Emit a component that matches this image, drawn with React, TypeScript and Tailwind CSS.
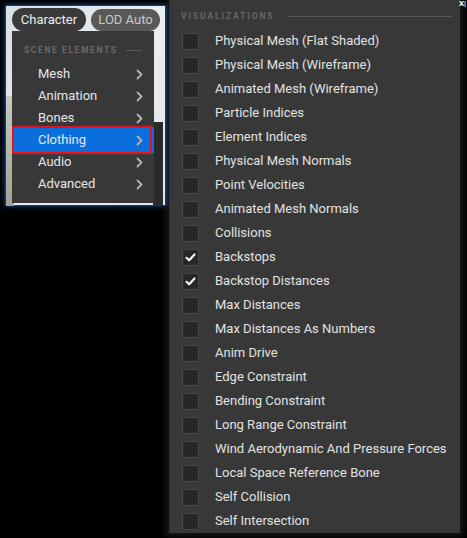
import React from 'react';

const sceneItems = ['Mesh', 'Animation', 'Bones', 'Clothing', 'Audio', 'Advanced'];

const visualizations = [
  { name: 'Physical Mesh (Flat Shaded)', checked: false },
  { name: 'Physical Mesh (Wireframe)', checked: false },
  { name: 'Animated Mesh (Wireframe)', checked: false },
  { name: 'Particle Indices', checked: false },
  { name: 'Element Indices', checked: false },
  { name: 'Physical Mesh Normals', checked: false },
  { name: 'Point Velocities', checked: false },
  { name: 'Animated Mesh Normals', checked: false },
  { name: 'Collisions', checked: false },
  { name: 'Backstops', checked: true },
  { name: 'Backstop Distances', checked: true },
  { name: 'Max Distances', checked: false },
  { name: 'Max Distances As Numbers', checked: false },
  { name: 'Anim Drive', checked: false },
  { name: 'Edge Constraint', checked: false },
  { name: 'Bending Constraint', checked: false },
  { name: 'Long Range Constraint', checked: false },
  { name: 'Wind Aerodynamic And Pressure Forces', checked: false },
  { name: 'Local Space Reference Bone', checked: false },
  { name: 'Self Collision', checked: false },
  { name: 'Self Intersection', checked: false },
];

const Chevron = () => (
  <svg width="7" height="11" viewBox="0 0 7 11" fill="none">
    <path d="M1.5 1.5 L5.5 5.5 L1.5 9.5" stroke="#b4b4b4" strokeWidth="1.8" strokeLinecap="round" strokeLinejoin="round" />
  </svg>
);

const Checkbox = ({ checked }: { checked: boolean }) => (
  <div className="w-[17px] h-[17px] rounded-[3px] bg-[#262626] border border-[#474747] flex items-center justify-center shrink-0">
    {checked && (
      <svg width="13" height="13" viewBox="0 0 13 13" fill="none">
        <path d="M2.5 6.8 L5.2 9.3 L10.5 3.5" stroke="#f4f4f4" strokeWidth="2.2" strokeLinecap="round" strokeLinejoin="round" />
      </svg>
    )}
  </div>
);

const App = () => {
  return (
    <div
      className="relative w-[467px] h-[538px] bg-black overflow-hidden flex items-start"
      style={{ fontFamily: 'Roboto, "Noto Sans", sans-serif' }}
    >
      {/* Viewport with scene menu */}
      <div className="mt-[5px] ml-[5px] w-[161px] h-[201px] border border-[#163a70] shadow-[0_0_5px_#1a4c9a] bg-gradient-to-br from-[#d9dfe3] via-[#e9eef2] to-[#dfe5ea] shrink-0 flex flex-col pl-[6px] pt-[2px] relative">
        <div className="absolute left-0 top-[90px] w-[8px] h-[110px] bg-gradient-to-b from-[#c7cbbf] to-[#9ea394]" />
        <div className="absolute right-[2px] top-[116px] w-[10px] h-[84px] bg-[#2b2b2b]" />
        <div className="flex gap-[5px] items-center relative">
          <div className="h-[23px] w-[74px] rounded-full bg-[#3a3a3a] text-[#ececec] text-[13px] flex items-center justify-center">
            Character
          </div>
          <div className="h-[22px] w-[69px] rounded-full bg-[#585858] text-[#c9c9c9] text-[13px] flex items-center justify-center">
            LOD Auto
          </div>
        </div>
        <div className="relative w-[142px] h-[172px] bg-[#383838] pt-[13px] pb-[9px] flex flex-col">
          <div className="flex items-center pl-[12px] pr-[12px] h-[12px]">
            <span className="text-[8.5px] font-bold tracking-[1.6px] text-[#6a6a6a]">SCENE ELEMENTS</span>
            <div className="ml-auto w-[16px] h-px bg-[#5a5a5a]" />
          </div>
          <div className="mt-[7px] flex flex-col">
            {sceneItems.map((item) => (
              <div key={item} className="relative h-[22px] flex items-center pl-[26px] pr-[11px]">
                {item === 'Clothing' && (
                  <>
                    <div className="absolute left-0 right-0 -top-[2px] -bottom-[2px] bg-[#0a6fdc]" />
                    <div className="absolute left-0 right-[2px] -top-[3px] -bottom-[3px] border-2 border-[#e8121c]" />
                  </>
                )}
                <span className="relative text-[13px] text-[#e6e6e6]">{item}</span>
                <span className="relative ml-auto flex items-center">
                  <Chevron />
                </span>
              </div>
            ))}
          </div>
        </div>
      </div>

      {/* Visualizations panel */}
      <div className="ml-[3px] w-[291px] h-[533px] bg-[#383838] border-l border-[#2c2c2c] shadow-[0_0_6px_3px_#1a1a1a] shrink-0 pt-[10px] flex flex-col">
        <div className="flex items-center h-[12px] pl-[11px] pr-[8px]">
          <span className="text-[8.5px] font-bold tracking-[1.9px] text-[#666666]">VISUALIZATIONS</span>
          <div className="ml-[14px] flex-1 h-px bg-[#5a5a5a]" />
        </div>
        <div className="mt-[7px] flex flex-col">
          {visualizations.map((v) => (
            <div key={v.name} className="h-[24px] flex items-center pl-[12px]">
              <Checkbox checked={v.checked} />
              <span className="ml-[16px] text-[13px] text-[#e2e2e2] whitespace-nowrap">{v.name}</span>
            </div>
          ))}
        </div>
      </div>

      <span className="absolute right-[1px] top-0 text-[8px] font-bold text-white leading-none">X|</span>
    </div>
  );
};

export default App;
